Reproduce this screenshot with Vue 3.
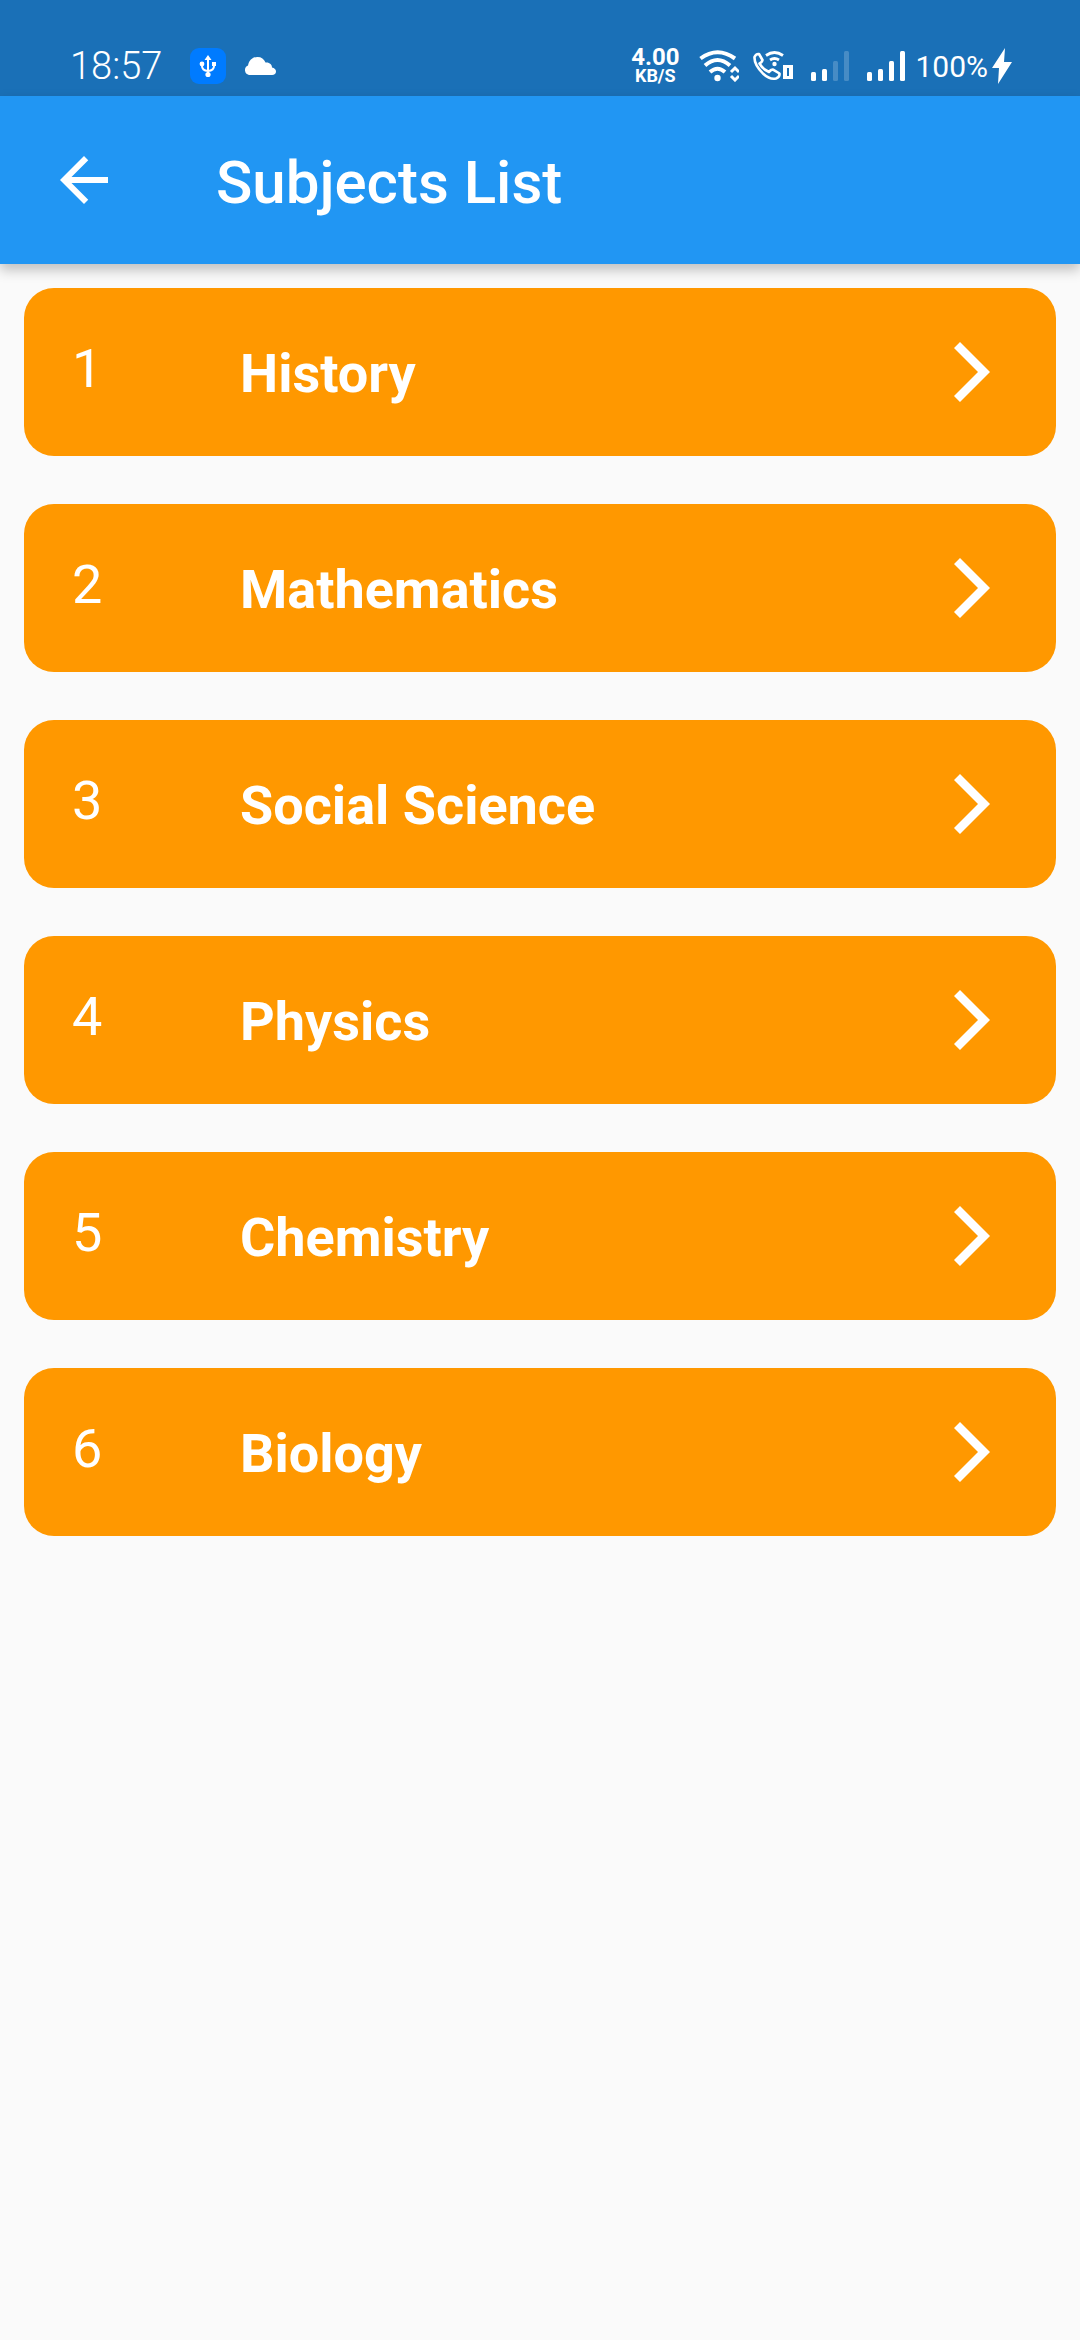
<script setup>
const subjects = ['History', 'Mathematics', 'Social Science', 'Physics', 'Chemistry', 'Biology']
</script>

<template>
  <div class="screen">
    <div class="status">
      <span class="time">18:57</span>
      <svg class="usb" width="36" height="36" viewBox="0 0 36 36">
        <rect width="36" height="36" rx="9" fill="#007bff" />
        <g fill="none" stroke="#fff" stroke-width="2">
          <path d="M18 10v17M12 17v1q0 4.500 6 5M24 17v1q0 4.500-6 5" />
        </g>
        <path fill="#fff" d="M18 7l3.500 5h-7zM22 14h4v4h-4z" />
        <circle cx="12" cy="16" r="2.400" fill="#fff" />
        <circle cx="18" cy="26.500" r="2.600" fill="#fff" />
      </svg>
      <svg class="cloud" width="32" height="18" viewBox="0 0 32 18">
        <path fill="#fff" d="M5 18a5 5 0 0 1-1-9.500C5 3 9 0 13.500 0c4 0 6.500 2 8 5.500 4-.5 6.500 2 6.500 5 2.500.5 4 2 4 4 0 2-1.500 3.500-4 3.500z" />
      </svg>
      <div class="indicators">
        <div class="speed"><span class="rate">4.00</span><span class="unit">KB/S</span></div>
        <svg class="wifi" width="40" height="32" viewBox="0 0 40 32">
          <g fill="none" stroke="#fff" stroke-width="4">
            <path d="M1.500 8.500Q18.500-4 36 8.500M6 15.500Q18.500 4.500 31 15.500M11 22Q18.500 15.500 26 22" />
            <path d="M32 22l4-4 4 4M32 26l4 4 4-4" stroke-width="3" />
          </g>
          <circle cx="18.500" cy="28" r="3.200" fill="#fff" />
        </svg>
        <svg class="call" width="40" height="30" viewBox="0 0 40 30">
          <g fill="none" stroke="#fff" stroke-width="2.600" stroke-linejoin="round">
            <path d="M1.500 6Q3 2.500 6 3l3.500 6Q9 11.500 6.500 12.500 10 18.500 16 21q2-3 4.500-2.200l6 3.700Q27 26 23 27.500 17 29 10.500 23 1 14 1.500 6z" />
            <path d="M13 4.500q8.500-6 17 0M17 9q4.500-3 9 0" stroke-width="2.800" />
          </g>
          <circle cx="21.500" cy="13" r="2.200" fill="#fff" />
          <path fill="#fff" fill-rule="evenodd" d="M30 14h10v14H30zM34 17v8h2v-8z" />
        </svg>
        <svg class="signal" width="38" height="30" viewBox="0 0 38 30" fill="#fff">
          <rect y="21" width="5" height="9" rx="1.500" /><rect x="11" y="18" width="5" height="12" rx="1.500" />
          <rect x="22" y="10" width="5" height="20" rx="1.500" opacity=".2" /><rect x="33" width="5" height="30" rx="1.500" opacity=".2" />
        </svg>
        <svg class="signal" width="38" height="30" viewBox="0 0 38 30" fill="#fff">
          <rect y="21" width="5" height="9" rx="1.500" /><rect x="11" y="18" width="5" height="12" rx="1.500" />
          <rect x="22" y="10" width="5" height="20" rx="1.500" /><rect x="33" width="5" height="30" rx="1.500" />
        </svg>
        <span class="battery">100%</span>
        <svg width="20" height="36" viewBox="0 0 20 36"><path fill="#fff" d="M13 0L0 20h7L6 36 20 14h-8z" /></svg>
      </div>
    </div>
    <header class="bar">
      <button class="back" aria-label="Back">
        <svg width="72" height="72" viewBox="0 0 24 24"><path fill="#fff" d="M20 11H7.830l5.590-5.590L12 4l-8 8 8 8 1.410-1.410L7.830 13H20v-2z" /></svg>
      </button>
      <h1>Subjects List</h1>
    </header>
    <ul class="list">
      <li v-for="(name, i) in subjects" :key="name">
        <button class="card">
          <span class="num">{{ i + 1 }}</span>
          <span class="name">{{ name }}</span>
          <svg width="36" height="60" viewBox="0 0 36 60"><path fill="#fff" d="M6 0L0 6l24 24L0 54l6 6 30-30z" /></svg>
        </button>
      </li>
    </ul>
  </div>
</template>

<style>
body {
  margin: 0;
  background: #fafafa;
}
</style>

<style scoped>
.screen {
  min-height: 100vh;
  background: #fafafa;
  color: #fff;
  font-family: Roboto, sans-serif;
}
.status {
  display: flex;
  align-items: center;
  box-sizing: border-box;
  height: 96px;
  padding: 36px 68px 0 70px;
  background: #1a70b7;
}
.time {
  font-size: 38px;
  line-height: 60px;
  font-weight: 300;
}
.usb {
  margin-left: 28px;
}
.cloud {
  margin-left: 18px;
}
.indicators {
  display: flex;
  align-items: center;
  margin-left: auto;
}
.speed {
  display: flex;
  flex-direction: column;
  align-items: center;
  margin-right: 20px;
  font-weight: 700;
}
.rate {
  font-size: 24px;
  line-height: 20px;
}
.unit {
  font-size: 18px;
  line-height: 18px;
}
.wifi {
  margin-right: 14px;
}
.call,
.signal {
  margin-right: 18px;
}
.signal + .signal {
  margin-right: 10px;
}
.battery {
  padding-top: 2px;
  margin-right: 4px;
  font-size: 30px;
  line-height: 58px;
}
.bar {
  position: relative;
  display: flex;
  align-items: center;
  height: 168px;
  padding: 0 48px;
  background: #2196f3;
  box-shadow: 0 6px 12px rgba(0, 0, 0, 0.24);
}
button {
  border: 0;
  margin: 0;
  background: none;
  color: inherit;
  font-family: inherit;
  cursor: pointer;
}
.back {
  display: flex;
  padding: 0;
}
h1 {
  margin: 0 0 0 96px;
  padding-top: 6px;
  font-size: 60px;
  line-height: 72px;
  font-weight: 500;
}
.list {
  display: flex;
  flex-direction: column;
  gap: 48px;
  margin: 0;
  padding: 24px;
  list-style: none;
}
.card {
  display: flex;
  align-items: center;
  box-sizing: border-box;
  width: 100%;
  height: 168px;
  padding: 0 66px 0 48px;
  border-radius: 30px;
  background: #ff9800;
  font-size: 54px;
  line-height: 64px;
  text-align: left;
}
.num {
  width: 168px;
  padding-bottom: 6px;
}
.name {
  flex: 1;
  padding-top: 4px;
  font-weight: 700;
}
</style>
